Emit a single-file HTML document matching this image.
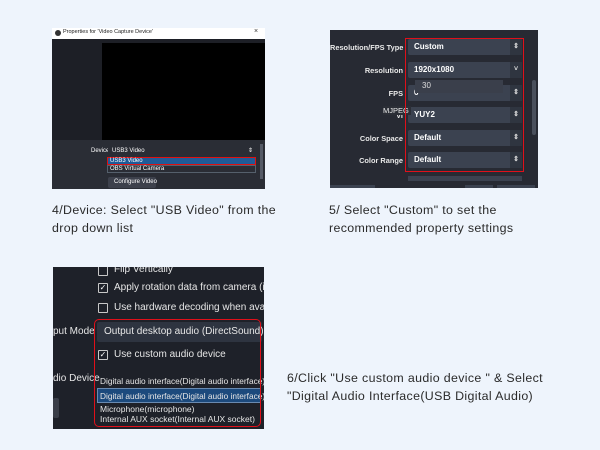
<!DOCTYPE html>
<html><head><meta charset="utf-8"><style>
*{margin:0;padding:0;box-sizing:border-box}
body{width:600px;height:450px;background:#eef4fc;position:relative;overflow:hidden;font-family:"Liberation Sans",sans-serif}
.a{position:absolute}
.cap{position:absolute;font-size:12.4px;color:#2a2a2a;line-height:18px;letter-spacing:0.35px}
.s{font-size:6px;color:#fff;white-space:nowrap;position:absolute}
.lb{font-size:7.4px;color:#e8e8e8;font-weight:bold;position:absolute;white-space:nowrap;text-align:right}
.dd{position:absolute;background:#3b4250;border-radius:2px;font-size:8px;color:#fff;padding-left:6px;line-height:16px;font-weight:bold}
.dd i{position:absolute;right:0;top:0;width:12px;height:16px;background:#2f3540;color:#ddd;font-style:normal;font-size:7px;text-align:center}
.t3{position:absolute;color:#e6e6e6;font-size:10px;white-space:nowrap}
.cb{position:absolute;width:10px;height:10px;border:1px solid #c8c8c8;border-radius:1px;font-size:8px;color:#fff;line-height:8px;text-align:center}
.clip{position:absolute;left:0;top:0;width:600px;height:450px;clip-path:inset(267px 336px 21px 53px)}
</style></head><body>
<!-- panel1 -->
<div class="a" style="left:52px;top:28px;width:213px;height:161px;background:#1d1f26"></div>
<div class="a" style="left:52px;top:28px;width:213px;height:11px;background:#fff"></div>
<div class="a" style="left:55px;top:30px;width:6px;height:6px;border-radius:50%;background:#333"></div>
<div class="a" style="left:63px;top:29px;font-size:5.5px;color:#222;white-space:nowrap">Properties for 'Video Capture Device'</div>
<div class="a" style="left:254px;top:28px;font-size:7px;color:#333">×</div>
<div class="a" style="left:102px;top:43px;width:163px;height:97px;background:#000"></div>
<div class="a" style="left:52px;top:140px;width:213px;height:49px;background:#2a2d35"></div>
<div class="s" style="left:91px;top:148px">Device</div>
<div class="a" style="left:108px;top:146px;width:150px;height:9px;background:#2a2d35"></div>
<div class="s" style="left:112px;top:148px">USB3 Video</div>
<div class="s" style="left:248px;top:147px">⇕</div>
<div class="a" style="left:260px;top:144px;width:3px;height:35px;background:#555a66"></div>
<div class="a" style="left:107px;top:157px;width:149px;height:8px;background:#1f5b98;border:1px solid #e01010"></div>
<div class="s" style="left:110px;top:158px">USB3 Video</div>
<div class="a" style="left:107px;top:165px;width:149px;height:8px;background:#2a2d35;border:1px solid #55606c"></div>
<div class="s" style="left:110px;top:166px">OBS Virtual Camera</div>
<div class="a" style="left:108px;top:177px;width:48px;height:11px;background:#3d414c;border-radius:2px"></div>
<div class="s" style="left:114px;top:179px">Configure Video</div>
<!-- panel2 -->
<div class="a" style="left:330px;top:30px;width:208px;height:158px;background:#272a33"></div>
<div class="lb" style="left:330px;top:43px;width:73px">Resolution/FPS Type</div>
<div class="lb" style="left:330px;top:66px;width:73px">Resolution</div>
<div class="lb" style="left:330px;top:89px;width:73px">FPS</div>
<div class="lb" style="left:330px;top:111px;width:73px">Vi</div>
<div class="lb" style="left:330px;top:134px;width:73px">Color Space</div>
<div class="lb" style="left:330px;top:156px;width:73px">Color Range</div>
<div class="dd" style="left:408px;top:39px;width:114px">Custom<i>⇕</i></div>
<div class="dd" style="left:408px;top:62px;width:114px">1920x1080<i>˅</i></div>
<div class="dd" style="left:408px;top:85px;width:114px">6<i>⇕</i></div>
<div class="dd" style="left:408px;top:107px;width:114px">YUY2<i>⇕</i></div>
<div class="dd" style="left:408px;top:130px;width:114px">Default<i>⇕</i></div>
<div class="dd" style="left:408px;top:152px;width:114px">Default<i>⇕</i></div>
<div class="a" style="left:415px;top:80px;width:88px;height:13px;background:#3a3f4b;font-size:8px;color:#ddd;padding:1px 7px">30</div>
<div class="a" style="left:383px;top:106px;width:28px;height:9px;background:#2b2e36;font-size:7.5px;color:#eee">MJPEG</div>
<div class="a" style="left:405px;top:38px;width:119px;height:134px;border:1.5px solid #e0101a"></div>
<div class="a" style="left:532px;top:80px;width:4px;height:55px;background:#4a505c;border-radius:2px"></div>
<div class="a" style="left:408px;top:176px;width:114px;height:5px;background:#3b4250"></div>
<div class="a" style="left:330px;top:185px;width:45px;height:3px;background:#3b4250"></div>
<div class="a" style="left:465px;top:185px;width:28px;height:3px;background:#3b4250"></div>
<div class="a" style="left:497px;top:185px;width:38px;height:3px;background:#3b4250"></div>
<!-- panel3 -->
<div class="clip">
<div class="a" style="left:53px;top:267px;width:211px;height:162px;background:#1e2129"></div>
<div class="cb" style="left:98px;top:266px"></div>
<div class="t3" style="left:114px;top:264px">Flip Vertically</div>
<div class="cb" style="left:98px;top:283px">✓</div>
<div class="t3" style="left:114px;top:282px">Apply rotation data from camera (if an</div>
<div class="cb" style="left:98px;top:303px"></div>
<div class="t3" style="left:114px;top:302px">Use hardware decoding when availabl</div>
<div class="t3" style="left:53px;top:326px">put Mode</div>
<div class="a" style="left:97px;top:322px;width:165px;height:20px;background:#2e3440;border-radius:2px"></div>
<div class="t3" style="left:104px;top:326px">Output desktop audio (DirectSound)</div>
<div class="cb" style="left:98px;top:350px">✓</div>
<div class="t3" style="left:114px;top:349px">Use custom audio device</div>
<div class="t3" style="left:53px;top:373px">dio Device</div>
<div class="t3" style="left:100px;top:376px;font-size:8.3px">Digital audio interface(Digital audio interface)</div>
<div class="a" style="left:97px;top:388px;width:164px;height:15px;background:#1c4a7d;border:1px solid #6a8ab0"></div>
<div class="t3" style="left:100px;top:391px;font-size:8.3px">Digital audio interface(Digital audio interface)</div>
<div class="t3" style="left:100px;top:404px;font-size:8.5px">Microphone(microphone)</div>
<div class="t3" style="left:100px;top:414px;font-size:8.5px">Internal AUX socket(Internal AUX socket)</div>
<div class="a" style="left:53px;top:398px;width:6px;height:20px;background:#3a3e48;border-radius:2px"></div>
<div class="a" style="left:94px;top:319px;width:167px;height:108px;border:1.5px solid #e0101a;border-radius:5px"></div>
</div>
<!-- captions -->
<div class="cap" style="left:52px;top:201px">4/Device: Select "USB Video" from the<br>drop down list</div>
<div class="cap" style="left:329px;top:201px">5/ Select "Custom" to set the<br>recommended property settings</div>
<div class="cap" style="left:287px;top:369px">6/Click "Use custom audio device " &amp; Select<br>"Digital Audio Interface(USB Digital Audio)</div>
</body></html>
